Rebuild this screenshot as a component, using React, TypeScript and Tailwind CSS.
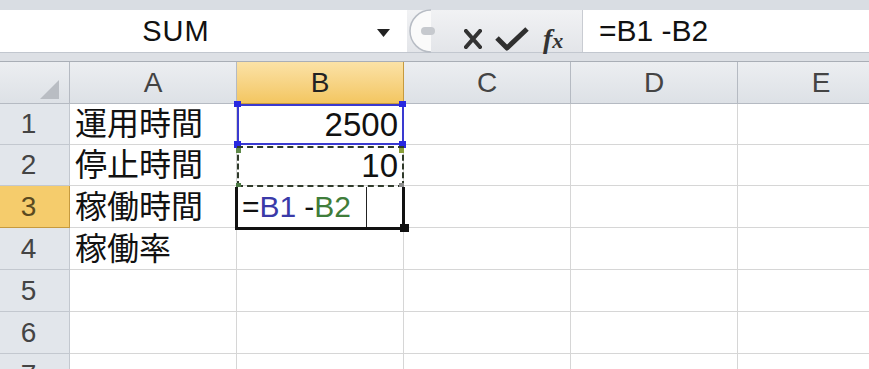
import type { ReactNode } from 'react';

const rows: { n: number; a: string; b: string }[] = [
  { n: 1, a: '運用時間', b: '2500' },
  { n: 2, a: '停止時間', b: '10' },
  { n: 3, a: '稼働時間', b: '' },
  { n: 4, a: '稼働率', b: '' },
  { n: 5, a: '', b: '' },
  { n: 6, a: '', b: '' },
  { n: 7, a: '', b: '' },
];

const cols = ['A', 'B', 'C', 'D', 'E'];

function Cell({ children, className = '' }: { children?: ReactNode; className?: string }) {
  return (
    <div className={`flex h-full w-[167px] shrink-0 items-center border-r border-b border-[#d6d6d6] bg-white ${className}`}>
      {children}
    </div>
  );
}

function App() {
  return (
    <div className="h-[369px] w-[869px] overflow-hidden bg-white font-['Liberation_Sans','Noto_Sans_CJK_JP',sans-serif] text-[#111]">
      {/* formula bar */}
      <div className="h-[10px] bg-[#d9dde3]" />
      <div className="flex h-[43px] border-b border-[#c2c7cf]">
        <div className="relative flex w-[407px] items-center justify-center bg-white">
          <span className="ml-[-55px] text-[29px] leading-none tracking-[1px]">SUM</span>
          <svg className="absolute top-[19px] left-[377px]" width="13" height="8" viewBox="0 0 13 8">
            <path d="M0 0 H13 L6.5 8 Z" fill="#222" />
          </svg>
        </div>
        <div className="relative flex w-[176px] items-center bg-linear-to-b from-[#f1f2f4] to-[#e3e5e9] border-r border-[#c9ccd2]">
          <svg className="absolute top-[-1px] left-0" width="40" height="45" viewBox="0 0 40 45">
            <path d="M24 1 A21 21 0 0 0 24 43" fill="#fafafa" stroke="#b7bcc4" strokeWidth="1.5" />
            <rect x="14" y="18" width="14" height="8" rx="4" fill="#c6c9ce" />
          </svg>
          <svg className="absolute top-[18px] left-[462px] hidden" width="1" height="1" />
          <svg className="absolute top-[19px] left-[57px]" width="18" height="20" viewBox="0 0 18 20">
            <path d="M2 2 L16 18 M16 2 L2 18" stroke="#333" strokeWidth="4" strokeLinecap="square" />
          </svg>
          <svg className="absolute top-[16px] left-[88px]" width="34" height="26" viewBox="0 0 34 26">
            <path d="M2 12 L12 22 L32 3" stroke="#2f2f2f" strokeWidth="5" fill="none" strokeLinejoin="round" />
          </svg>
          <span className="absolute top-[8px] left-[136px] font-['Liberation_Serif',serif] text-[28px] font-bold italic text-[#333]">
            f<span className="text-[22px]">x</span>
          </span>
        </div>
        <div className="flex flex-1 items-center bg-white pl-[16px]">
          <span className="text-[30px] leading-none">=B1 -B2</span>
        </div>
      </div>
      <div className="h-[9px] border-b border-[#a9aeb6] bg-[#dde0e5]" />

      {/* grid */}
      <div className="relative">
        <div className="flex h-[42px]">
          <div className="relative h-full w-[70px] shrink-0 border-r border-b border-[#b5bac2] bg-linear-to-b from-[#eceef1] to-[#dde1e6]">
            <svg className="absolute top-[18px] left-[40px]" width="19" height="19" viewBox="0 0 19 19">
              <path d="M19 0 V19 H0 Z" fill="#b9bdc3" />
            </svg>
          </div>
          {cols.map((c) => (
            <div
              key={c}
              className={`flex h-full w-[167px] shrink-0 items-center justify-center border-r border-b text-[28px] leading-none ${
                c === 'B'
                  ? 'border-[#c69a3e] bg-linear-to-b from-[#fbe2a6] to-[#f3c660] text-[#222]'
                  : 'border-[#b5bac2] bg-linear-to-b from-[#eceef1] to-[#dde1e6] text-[#444]'
              }`}
            >
              {c}
            </div>
          ))}
        </div>
        {rows.map((r) => (
          <div key={r.n} className={`flex ${r.n <= 2 ? 'h-[41px]' : 'h-[42px]'}`}>
            <div
              className={`flex h-full w-[70px] shrink-0 items-center justify-center border-r border-b pr-[12px] text-[28px] leading-none ${
                r.n === 3
                  ? 'border-[#c69a3e] bg-[#f5cc6c] text-[#5a4a20]'
                  : 'border-[#c3c8cf] bg-[#e2e6eb] text-[#444]'
              }`}
            >
              {r.n}
            </div>
            <Cell className="pl-[5px] text-[32px] leading-none">{r.a}</Cell>
            <Cell className="justify-end pr-[5px] text-[33px] leading-none">{r.b}</Cell>
            <Cell />
            <Cell />
            <Cell />
          </div>
        ))}

        {/* B1 reference range (blue) */}
        <div className="absolute top-[42px] left-[237px] h-[41px] w-[167px] border-2 border-[#3a3ad0]" />
        <span className="absolute top-[39px] left-[234px] h-[6px] w-[7px] bg-[#2828e0]" />
        <span className="absolute top-[39px] left-[399px] h-[6px] w-[7px] bg-[#2828e0]" />
        <span className="absolute top-[79px] left-[234px] h-[7px] w-[7px] bg-[#2828e0]" />
        <span className="absolute top-[79px] left-[399px] h-[7px] w-[7px] bg-[#2828e0]" />

        {/* B2 reference range (green, dashed) */}
        <div className="absolute top-[84px] left-[237px] h-[41px] w-[167px] border-2 border-dashed border-[#2f3a2a]" />
        <span className="absolute top-[86px] left-[236px] h-[5px] w-[5px] bg-[#5f8a4a]" />
        <span className="absolute top-[86px] left-[399px] h-[5px] w-[5px] bg-[#8aa03a]" />
        <span className="absolute top-[121px] left-[236px] h-[5px] w-[5px] bg-[#4d7a45]" />
        <span className="absolute top-[121px] left-[399px] h-[5px] w-[5px] bg-[#8c8c8c]" />

        {/* B3 active cell in edit mode */}
        <div className="absolute top-[125px] left-[235px] flex h-[43px] w-[170px] border-x-[3px] border-b-[3px] border-[#111] bg-white">
          <div className="flex h-full w-[129px] items-center border-r border-[#222] pl-[4px] text-[30px] leading-none">
            <span>=</span>
            <span className="text-[#3a3aa8]">B1</span>
            <span className="ml-[8px]">-</span>
            <span className="text-[#3f7d3a]">B2</span>
          </div>
        </div>
        <span className="absolute top-[162px] left-[400px] h-[8px] w-[9px] bg-[#111]" />
      </div>
    </div>
  );
}

export default App;
